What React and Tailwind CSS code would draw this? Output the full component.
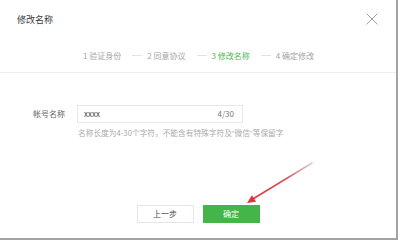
import React from "react";

const font = { fontFamily: '"Noto Sans CJK SC", "Noto Sans", sans-serif' };

function Step({ n, label, active }) {
  return (
    <span className={active ? "text-[#4cb954]" : "text-[#a6a6a6]"}>
      {n} {label}
    </span>
  );
}

function Dash() {
  return <span className="inline-block w-[10px] h-px bg-[#e3e3e3] ml-[11px] mr-[5px]" />;
}

export default function App() {
  return (
    <div className="w-[398px] h-[240px] bg-[#a3a3a3] overflow-hidden" style={font}>
      <div className="relative w-[396px] h-[238px] bg-white">
        <div className="h-[40px] flex items-center justify-between pl-[17px] pr-[18px]">
          <span className="text-[9px] text-[#3a3a3a]">修改名称</span>
          <svg width="12" height="12" viewBox="0 0 12 12" className="mt-[-3px]">
            <path d="M0.5 0.5 L11.5 11.5 M11.5 0.5 L0.5 11.5" stroke="#a0a0a0" strokeWidth="1" fill="none" />
          </svg>
        </div>
        <div className="h-[33px] flex items-center justify-center border-b border-[#efefef] text-[8px] leading-none pb-[1px] pl-[1px]">
          <Step n="1" label="验证身份" />
          <Dash />
          <Step n="2" label="同意协议" />
          <Dash />
          <Step n="3" label="修改名称" active />
          <Dash />
          <Step n="4" label="确定修改" />
        </div>
        <div className="mt-[32px] flex items-center h-[18px]">
          <span className="w-[65px] text-right text-[8px] text-[#666]">帐号名称</span>
          <div className="ml-[12px] w-[166px] h-[18px] border border-[#e8e8e8] flex items-center justify-between pl-[6px] pr-[8px] text-[8px]">
            <span className="text-[#444]">xxxx</span>
            <span className="text-[#777]">4/30</span>
          </div>
        </div>
        <div className="ml-[78px] mt-[5px] text-[7.7px] leading-[10px] text-[#ababab] whitespace-nowrap">
          名称长度为4-30个字符，不能含有特殊字符及
          <span style={{ fontFamily: '"Liberation Sans", sans-serif' }}>"</span>
          微信
          <span style={{ fontFamily: '"Liberation Sans", sans-serif' }}>"</span>
          等保留字
        </div>
        <div className="mt-[66px] flex justify-center gap-[9px]">
          <button className="w-[57px] h-[18px] border border-[#e5e5e5] bg-white text-[8px] text-[#444]">上一步</button>
          <button className="w-[57px] h-[18px] bg-[#44b549] text-[8px] text-white">确定</button>
        </div>
        <svg className="absolute left-0 top-0 pointer-events-none" width="396" height="238">
          <defs>
            <linearGradient id="ag" x1="312" y1="163" x2="248" y2="202" gradientUnits="userSpaceOnUse">
              <stop offset="0" stopColor="#b9aeb4" stopOpacity="0.6" />
              <stop offset="0.4" stopColor="#d8545c" />
              <stop offset="1" stopColor="#e0323a" />
            </linearGradient>
          </defs>
          <line x1="312" y1="163" x2="252" y2="199.5" stroke="url(#ag)" strokeWidth="1.6" strokeLinecap="round" />
          <polygon points="247,203 256,201.8 252,195.3" fill="#e0323a" />
        </svg>
      </div>
    </div>
  );
}
